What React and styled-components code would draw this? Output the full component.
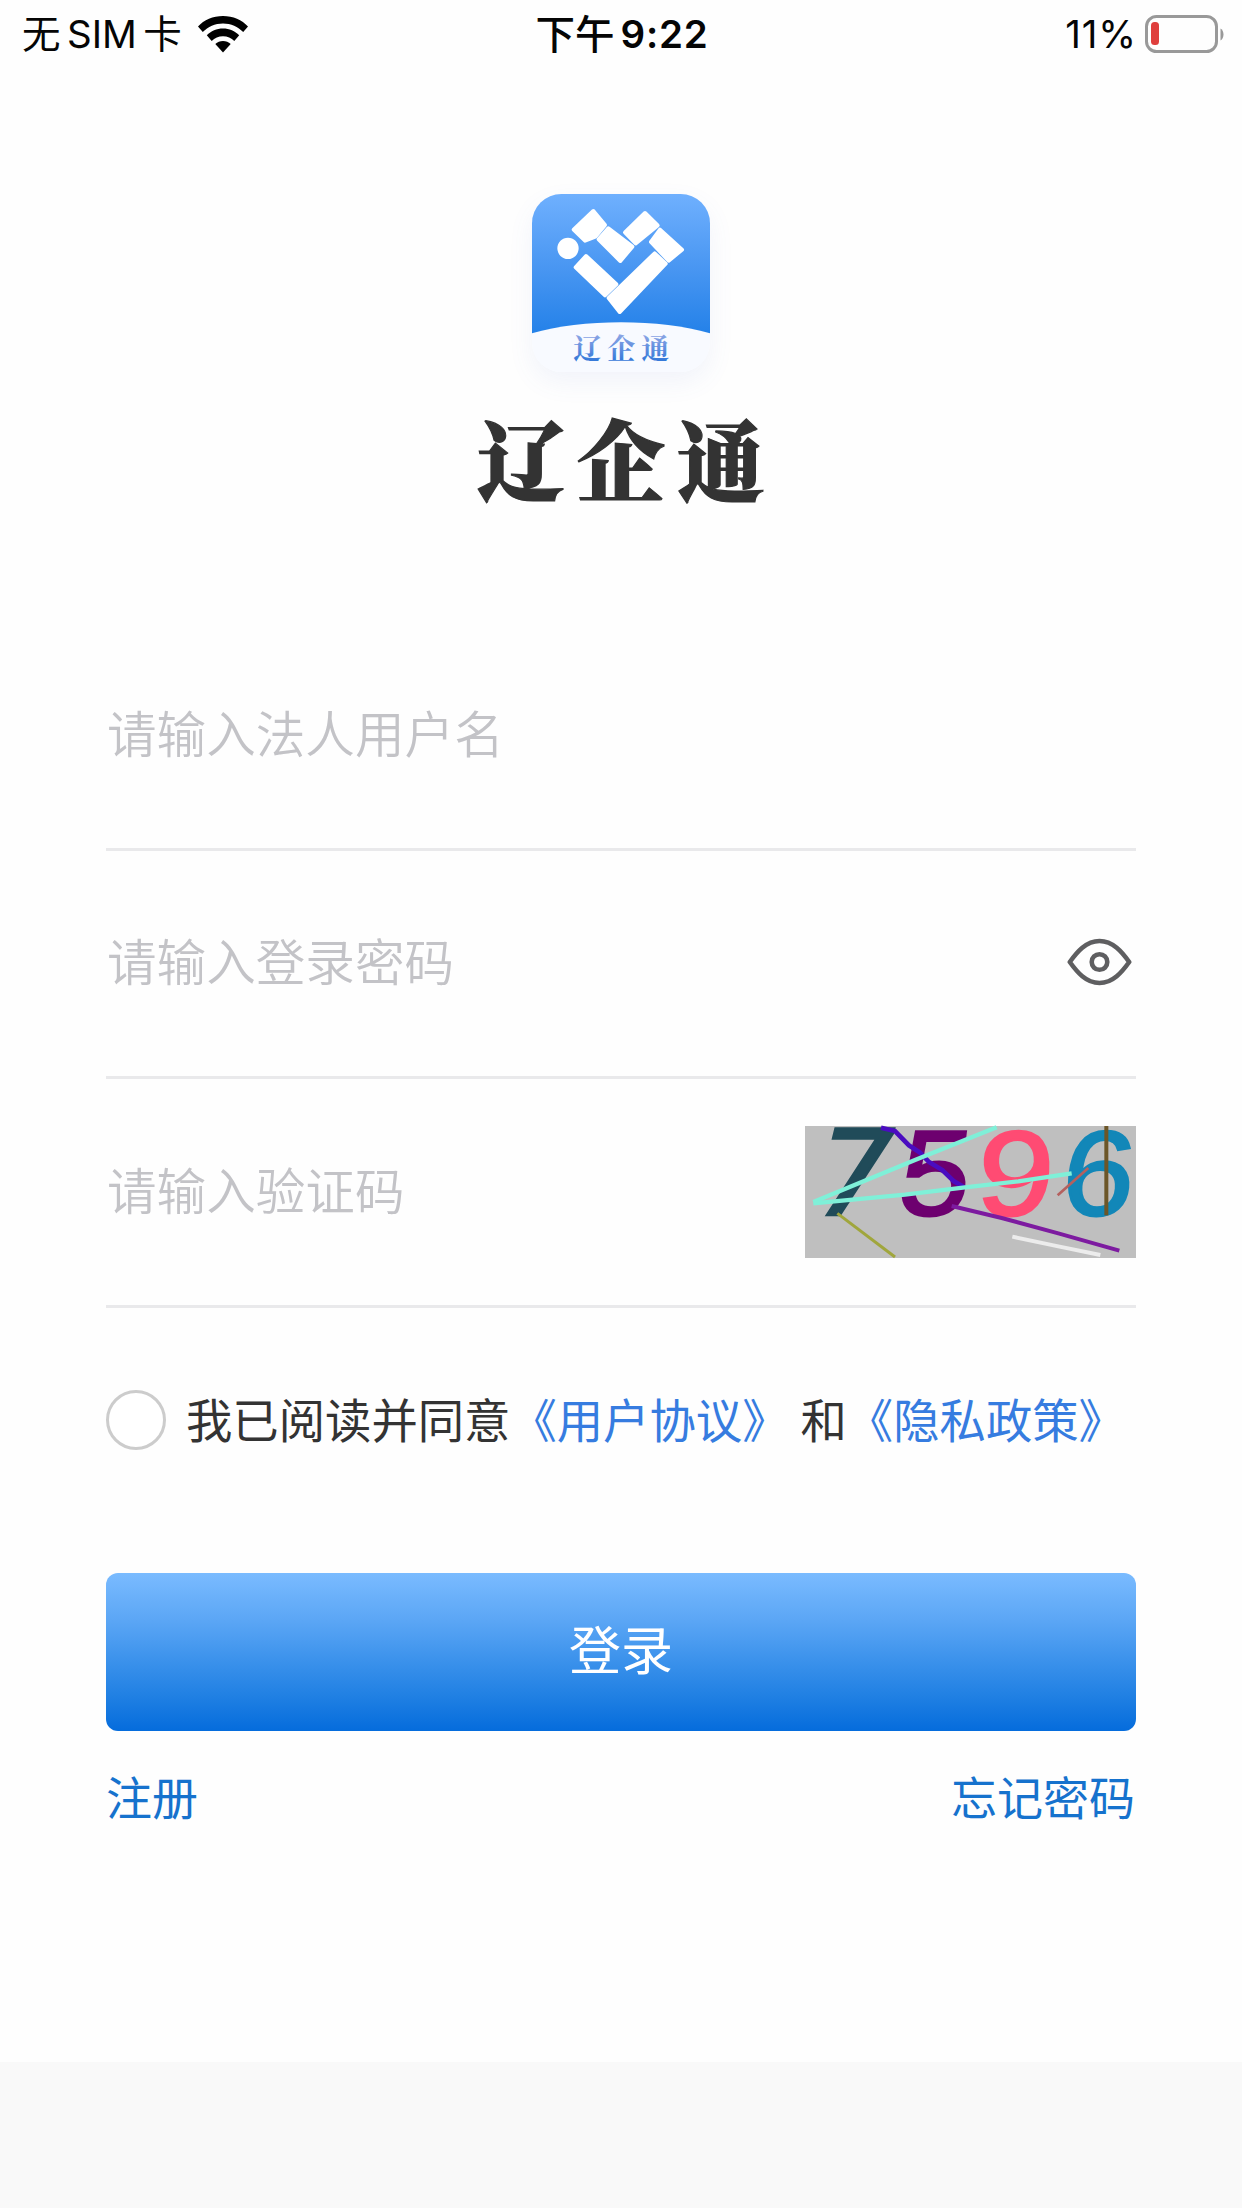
import React, { useState } from "react";
import styled, { createGlobalStyle } from "styled-components";

const GlobalStyle = createGlobalStyle`
  * { box-sizing: border-box; }
  body {
    margin: 0;
    background: #fefefe;
    font-family: "Noto Sans CJK SC", sans-serif;
  }
`;

const Screen = styled.div`
  display: flex;
  flex-direction: column;
  width: 1242px;
  height: 2208px;
  overflow: hidden;
  background: #fefefe;
`;

const StatusBar = styled.header`
  display: grid;
  grid-template-columns: 1fr auto 1fr;
  align-items: center;
  height: 68px;
  padding: 0 18px 0 22px;
  color: #050505;
  font-family: Inter, "Noto Sans CJK SC", sans-serif;
  font-size: 38.5px;
  line-height: 68px;
`;

const StatusGroup = styled.div`
  display: flex;
  align-items: center;
  justify-content: ${(p) => (p.$end ? "flex-end" : "flex-start")};
  gap: ${(p) => p.$gap}px;
  height: 66px;
`;

const Carrier = styled.span`
  display: flex;
  gap: 6.5px;
`;

const Clock = styled.time`
  display: flex;
  gap: 6px;
  margin-right: 2px;
  font-weight: 600;
  letter-spacing: 0.8px;
`;

const ClockPeriod = styled.span`
  margin-top: -2px;
  font-family: "Noto Sans CJK SC", sans-serif;
  font-weight: 500;
  font-size: 39.5px;
  letter-spacing: 0;
`;

const Percent = styled.span`
  letter-spacing: 0.9px;
`;

const Brand = styled.section`
  display: flex;
  flex-direction: column;
  align-items: center;
  height: 554px;
  padding-top: 126px;
`;

const LogoFrame = styled.div`
  width: 178px;
  height: 178px;
  border-radius: 30px;
  box-shadow: 0 10px 26px rgba(90, 110, 200, 0.08);
`;

const BrandName = styled.h1`
  margin: 29px 0 0;
  padding-left: 12px;
  color: #333;
  font-family: "Noto Serif CJK SC", "Noto Sans CJK SC", serif;
  font-size: 88px;
  font-weight: 900;
  line-height: 110px;
  letter-spacing: 12px;
  -webkit-text-stroke: 1.2px #333;
`;

const Form = styled.form`
  display: flex;
  flex-direction: column;
  padding: 0 106px;
`;

const Field = styled.label`
  display: flex;
  align-items: center;
  height: 228.6px;
  border-bottom: 3px solid #e9e9eb;
`;

const Input = styled.input`
  flex: 1;
  min-width: 0;
  height: 80px;
  margin-bottom: 8px;
  padding: 0 0 0 1px;
  border: 0;
  outline: 0;
  background: transparent;
  color: #333;
  font: 350 49.6px/80px "Noto Sans CJK SC", sans-serif;
  &::placeholder {
    color: #c3c3c7;
    opacity: 1;
  }
`;

const EyeButton = styled.button`
  display: flex;
  padding: 0;
  margin: 0 4px 2px 0;
  border: 0;
  background: none;
`;

const Agreement = styled.div`
  display: flex;
  align-items: center;
  height: 60px;
  margin-top: 82px;
  color: #333;
  font-size: 46.35px;
  line-height: 60px;
  white-space: pre;
`;

const Radio = styled.button`
  width: 60px;
  height: 60px;
  margin-right: 20px;
  padding: 0;
  border: 3px solid #ccc;
  border-radius: 50%;
  background: ${(p) => (p.$checked ? "#3a7ee0" : "#fff")};
`;

const Policy = styled.span`
  color: #367ce0;
  margin-right: ${(p) => p.$after || 0}px;
`;

const AgreementText = styled.span`
  margin-top: -4px;
`;

const Submit = styled.button`
  height: 158px;
  margin-top: 123px;
  padding: 0 0 8px;
  border: 0;
  border-radius: 12px;
  background: linear-gradient(#7abbff 0%, #5ba6f5 30%, #3d93ec 54%, #2080e3 78%, #056cdc 100%);
  color: #fff;
  font: 400 52px/80px "Noto Sans CJK SC", sans-serif;
`;

const Links = styled.nav`
  display: flex;
  justify-content: space-between;
  margin: 32px 1px 0 0;
  color: #1672cd;
  font-size: 46px;
  line-height: 64px;
`;

const Footer = styled.footer`
  height: 146px;
  margin-top: auto;
  background: #f9f9f9;
`;

const CaptchaImage = styled.svg`
  flex: none;
  overflow: visible;
`;

function WifiIcon() {
  return (
    <svg width="50" height="37" viewBox="0 0 50 37">
      <path d="M25 0C35 0 44 4 50 10.5L45.2 16C40 10.7 33 7.4 25 7.4S10 10.7 4.8 16L0 10.5C6 4 15 0 25 0Z" />
      <path d="M25 12.5c6.300 0 12 2.500 16.200 6.700L36.300 25C33.400 22 29.400 20.200 25 20.200S16.600 22 13.700 25L8.800 19.200C13 15 18.700 12.500 25 12.500Z" />
      <path d="M25 25c3 0 5.600 1 7.700 2.900L25 36.500l-7.700-8.600C19.400 26 22 25 25 25Z" />
    </svg>
  );
}

function BatteryIcon() {
  return (
    <svg width="79" height="39" viewBox="0 0 79 39" fill="none">
      <rect x="1.500" y="1.500" width="70" height="35" rx="10" stroke="#999" strokeWidth="3" />
      <rect x="6" y="7" width="8" height="23" rx="3.500" fill="#df3f3d" />
      <path d="M75.500 13.500c4 2 4 10 0 12Z" fill="#999" />
    </svg>
  );
}

function AppLogo() {
  return (
    <svg width="178" height="178" viewBox="0 0 534 534">
      <defs>
        <linearGradient id="sky" x1="0" y1="0" x2="0" y2="1">
          <stop offset="0" stopColor="#6fb0fe" />
          <stop offset="0.5" stopColor="#4a97f2" />
          <stop offset="1" stopColor="#2280e8" />
        </linearGradient>
        <linearGradient id="ink" x1="0" y1="0" x2="0" y2="1">
          <stop offset="0.2" stopColor="#8aa4e4" />
          <stop offset="1" stopColor="#1f6ed6" />
        </linearGradient>
        <clipPath id="tile"><rect width="534" height="534" rx="88" /></clipPath>
      </defs>
      <g clipPath="url(#tile)">
        <rect width="534" height="430" fill="url(#sky)" />
        <path d="M0 418C150 374 384 374 534 418V534H0Z" fill="#f8faff" />
      </g>
      <g fill="#fff" stroke="#fff" strokeWidth="12" strokeLinejoin="round">
        <circle cx="108" cy="163" r="26" />
        <path d="M184 51 219 93 190 128 159 140 125 107Z" />
        <path d="M229 103 301 158 265 201 200 136Z" />
        <path d="M339 57 377 94 311 148 279 115Z" />
        <path d="M384 107 450 167 410 200 357 144Z" />
        <path d="M368 178 401 209 263 354 230 312Z" />
        <path d="M162 186 253 271 219 304 131 220Z" />
      </g>
      <text x="124" y="496" fontFamily='"Noto Serif CJK SC", "Noto Sans CJK SC", serif' fontWeight="700" fontSize="84" letterSpacing="18" fill="url(#ink)">辽企通</text>
    </svg>
  );
}

function EyeIcon() {
  return (
    <svg width="65" height="48" viewBox="0 0 65 48" fill="none" stroke="#5e5e60" strokeWidth="4.600" strokeLinejoin="round">
      <path d="M2.800 24C10 14 19 3 32.500 3S55 14 62.200 24C55 34 46 45 32.500 45S10 34 2.800 24Z" />
      <circle cx="32.500" cy="24" r="7.800" />
    </svg>
  );
}

const LIBERATION = '"Liberation Sans", sans-serif';
const DEJAVU = '"DejaVu Sans", sans-serif';

const DIGITS = [
  { char: "7", color: "#204b59", matrix: "matrix(1.05 0 -0.245 1 -2 267)", size: 356, font: DEJAVU },
  { char: "5", color: "#6d006f", matrix: "matrix(1.04 0 -0.12 1 272 267)", size: 364, font: LIBERATION },
  { char: "9", color: "#ff4b73", matrix: "matrix(1.14 0 -0.07 1 510 266)", size: 360, font: LIBERATION },
  { char: "6", color: "#1287b8", matrix: "matrix(1.07 0 -0.1 1 763 266)", size: 360, font: LIBERATION },
];

function Captcha() {
  return (
    <CaptchaImage width="331" height="132" viewBox="0 0 993 396" fill="none">
      <rect width="993" height="396" fill="#bfbfbf" />
      {DIGITS.map((d) => (
        <text key={d.char} transform={d.matrix} fontFamily={d.font} fontSize={d.size} fill={d.color} stroke={d.color} strokeWidth="8">
          {d.char}
        </text>
      ))}
      <path d="M228 5 270 15 312 58 345 80 372 108 412 132 447 166 478 184" stroke="#4a0cc0" strokeWidth="14" />
      <path d="M25 228 330 102 575 4" stroke="#7ff0d8" strokeWidth="13" />
      <path d="M25 232 300 206 480 184 640 166 800 142" stroke="#7ff0d8" strokeWidth="13" />
      <path d="M97 262 270 393" stroke="#a0a63c" strokeWidth="9" />
      <path d="M440 240 590 276 760 322 943 374" stroke="#7d1ba0" strokeWidth="12" />
      <path d="M622 332 760 361 886 387" stroke="#ececec" strokeWidth="12" />
      <path d="M758 208 850 126" stroke="#b5605e" strokeWidth="8" />
      <path d="M904 0V268" stroke="#6c5628" strokeWidth="12" />
    </CaptchaImage>
  );
}

export default function App() {
  const [agreed, setAgreed] = useState(false);
  const [visible, setVisible] = useState(false);
  return (
    <>
      <GlobalStyle />
      <Screen>
        <StatusBar>
          <StatusGroup $gap={16}>
            <Carrier><span>无</span><span>SIM</span><span>卡</span></Carrier>
            <WifiIcon />
          </StatusGroup>
          <Clock><ClockPeriod>下午</ClockPeriod><span>9:22</span></Clock>
          <StatusGroup $end $gap={8}>
            <Percent>11%</Percent>
            <BatteryIcon />
          </StatusGroup>
        </StatusBar>
        <Brand>
          <LogoFrame><AppLogo /></LogoFrame>
          <BrandName>辽企通</BrandName>
        </Brand>
        <Form onSubmit={(e) => e.preventDefault()}>
          <Field>
            <Input placeholder="请输入法人用户名" />
          </Field>
          <Field>
            <Input type={visible ? "text" : "password"} placeholder="请输入登录密码" />
            <EyeButton type="button" onClick={() => setVisible(!visible)}><EyeIcon /></EyeButton>
          </Field>
          <Field>
            <Input placeholder="请输入验证码" />
            <Captcha />
          </Field>
          <Agreement>
            <Radio type="button" $checked={agreed} onClick={() => setAgreed(!agreed)} />
            <AgreementText>
              我已阅读并同意<Policy $after={12}>《用户协议》</Policy>和<Policy>《隐私政策》</Policy>
            </AgreementText>
          </Agreement>
          <Submit>登录</Submit>
          <Links><span>注册</span><span>忘记密码</span></Links>
        </Form>
        <Footer />
      </Screen>
    </>
  );
}
